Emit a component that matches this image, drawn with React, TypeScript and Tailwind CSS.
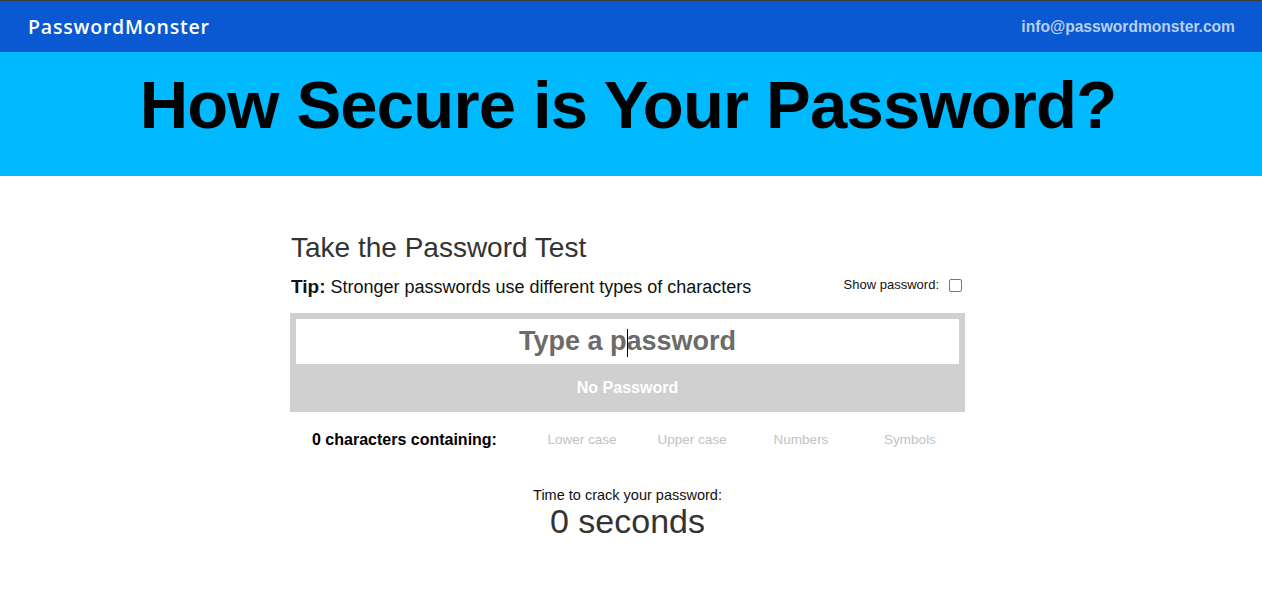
import React from "react";

export default function App() {
  const sans = { fontFamily: '"Liberation Sans", Arial, sans-serif' } as React.CSSProperties;
  return (
    <div className="w-full min-h-[601px] bg-white" style={sans}>
      <div className="h-[1px] bg-[#3a3a3a]" />
      <header className="h-[51px] bg-[#0b58d3] flex items-center justify-between pl-[28px] pr-[27px]">
        <div
          className="text-white text-[19.5px] tracking-[0.8px] leading-none"
          style={{ fontFamily: '"Open Sans", "Liberation Sans", sans-serif', fontWeight: 600 }}
        >
          PasswordMonster
        </div>
        <div className="text-[#b7cff3] text-[15.6px] font-bold leading-none">info@passwordmonster.com</div>
      </header>
      <section className="h-[124px] bg-[#00b9ff] pt-[15px]">
        <h1 className="text-center text-black font-bold text-[67px] leading-[76px] tracking-[-0.8px] pr-[6px]">
          How Secure is Your Password?
        </h1>
      </section>
      <main className="w-[675px] ml-[290px] pt-[56px]">
        <h2 className="text-[28px] leading-[32px] text-[#333] pl-[1px]">Take the Password Test</h2>
        <div className="mt-[11px] flex items-center justify-between h-[24px]">
          <div className="text-[#111] pl-[1px]">
            <span className="font-bold text-[19px]">Tip:</span>
            <span className="text-[18px]"> Stronger passwords use different types of characters</span>
          </div>
          <label className="flex items-center gap-[10px] text-[13px] text-[#111] pr-[3px] -mt-[4px]">
            Show password:
            <span className="w-[13px] h-[13px] border border-[#767676] rounded-[2px] bg-white inline-block" />
          </label>
        </div>
        <div className="mt-[14px] bg-[#d0d0d0] pt-[6px] px-[6px]">
          <div className="relative h-[45px] bg-white">
            <input
              className="w-full h-full text-center text-[27px] font-bold outline-none bg-transparent placeholder:text-[#6b6b6b]"
              style={sans}
              placeholder="Type a password"
            />
            <div className="absolute left-[331px] top-[10px] w-[1px] h-[28px] bg-black" />
          </div>
          <div className="h-[48px] flex items-center justify-center text-white font-bold text-[16px]">
            No Password
          </div>
        </div>
        <div className="mt-[16px] h-[24px] flex items-center">
          <div className="w-[237px] pl-[22px] font-bold text-[16px] text-black">0 characters containing:</div>
          <div className="w-[110px] text-center text-[13.5px] text-[#c2c2c2]">Lower case</div>
          <div className="w-[110px] text-center text-[13.5px] text-[#c2c2c2]">Upper case</div>
          <div className="w-[108px] text-center text-[13.5px] text-[#c2c2c2]">Numbers</div>
          <div className="w-[110px] text-center text-[13.5px] text-[#c2c2c2]">Symbols</div>
        </div>
        <div className="mt-[35px] text-center">
          <div className="text-[14.5px] leading-[16px] text-[#111]">Time to crack your password:</div>
          <div className="text-[34px] leading-[36px] text-[#333]">0 seconds</div>
        </div>
      </main>
    </div>
  );
}
